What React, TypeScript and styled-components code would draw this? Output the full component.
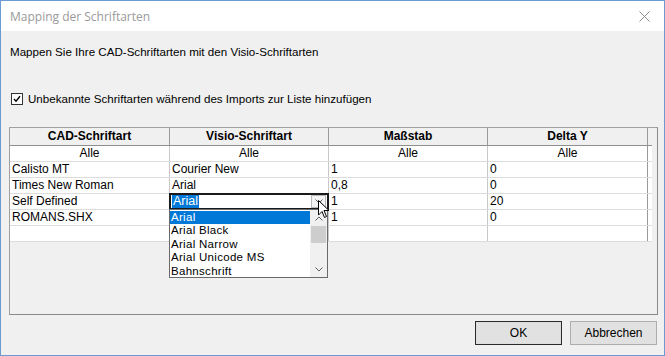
import * as React from 'react';
import styled, { createGlobalStyle } from 'styled-components';

interface IMapping {
	cad: string;
	visio: string;
	scale: string;
	deltaY: string;
	editing?: boolean;
}

const GlobalStyle = createGlobalStyle`
	html, body {
		margin: 0;
		padding: 0;
		background: #ffffff;
	}
	body {
		font-family: "Liberation Sans", Arial, sans-serif;
		font-size: 12px;
		color: #000;
	}
`;

const Window = styled.div`
	position: relative;
	width: 665px;
	height: 356px;
	box-sizing: border-box;
	border: 1px solid #6b9ad4;
	background: #f0f0f0;
	display: flex;
	flex-direction: column;
	overflow: hidden;
`;

const TitleBar = styled.div`
	height: 30px;
	flex: none;
	background: #ffffff;
	display: flex;
	align-items: center;
	justify-content: space-between;
	padding: 0 14px 0 9px;
`;

const Title = styled.div`
	font-family: "Open Sans", "Noto Sans", sans-serif;
	font-size: 12px;
	color: #9a9a9a;
`;

const Body = styled.div`
	flex: 1;
	display: flex;
	flex-direction: column;
	padding: 0 6px 0 8px;
`;

const Intro = styled.div`
	margin-top: 13px;
	line-height: 16px;
	font-size: 11.6px;
	padding-left: 1px;
`;

const CheckRow = styled.label`
	margin-top: 31px;
	display: flex;
	align-items: center;
	gap: 5px;
	line-height: 16px;
	font-size: 11.6px;
	padding-left: 2px;
`;

const CheckBox = styled.span`
	width: 10px;
	height: 10px;
	border: 1px solid #333;
	background: #fff;
	display: flex;
	align-items: center;
	justify-content: center;
`;

const GridFrame = styled.div`
	position: relative;
	margin-top: 20px;
	height: 188px;
	box-sizing: border-box;
	border: 1px solid #a0a0a0;
	border-right-color: #8a8a8a;
	border-bottom-color: #8a8a8a;
	padding-right: 5px;
`;

const Row = styled.div<{ $head?: boolean }>`
	display: grid;
	grid-template-columns: 160px 159px 159px 160px;
	height: ${(p) => (p.$head ? '18px' : '16px')};
	background: ${(p) => (p.$head ? '#f0f0f0' : '#ffffff')};
	border-bottom: 1px solid ${(p) => (p.$head ? '#8f8f8f' : '#dcdcdc')};
	box-sizing: border-box;
`;

const Cell = styled.div<{ $head?: boolean; $center?: boolean }>`
	position: relative;
	padding: 0 2px;
	line-height: ${(p) => (p.$head ? '17px' : '15px')};
	font-weight: ${(p) => (p.$head ? 'bold' : 'normal')};
	text-align: ${(p) => (p.$head || p.$center ? 'center' : 'left')};
	border-right: 1px solid ${(p) => (p.$head ? '#9a9a9a' : '#c8c8c8')};
	white-space: nowrap;
	overflow: visible;
	&:last-child {
		border-right: 1px solid #9a9a9a;
	}
`;

const Combo = styled.div`
	position: absolute;
	left: -1px;
	top: -1px;
	right: -1px;
	height: 17px;
	box-sizing: border-box;
	border: 2px solid #1a1a1a;
	background: #fff;
	display: flex;
	align-items: center;
	padding-left: 1px;
	z-index: 2;
`;

const Selected = styled.span`
	background: #0078d7;
	color: #fff;
	line-height: 13px;
	font-size: 12.5px;
	padding: 0 1px;
`;

const ComboButton = styled.span`
	margin-left: auto;
	width: 13px;
	height: 11px;
	border: 1px solid #b8b8b8;
	background: #f4f4f4;
	display: flex;
	align-items: center;
	justify-content: center;
	margin-right: 1px;
`;

const DropList = styled.div`
	position: absolute;
	left: 159px;
	top: 81px;
	width: 159px;
	height: 69px;
	box-sizing: border-box;
	border: 1px solid #6a6a6a;
	background: #fff;
	display: flex;
	z-index: 3;
`;

const Items = styled.div`
	flex: 1;
	padding-top: 1px;
`;

const Item = styled.div<{ $active?: boolean }>`
	height: 13.4px;
	line-height: 13.4px;
	font-size: 11.5px;
	letter-spacing: 0.3px;
	padding-left: 1px;
	background: ${(p) => (p.$active ? '#0078d7' : 'transparent')};
	color: ${(p) => (p.$active ? '#fff' : '#000')};
	white-space: nowrap;
	overflow: hidden;
`;

const ScrollBar = styled.div`
	width: 17px;
	background: #f0f0f0;
	display: flex;
	flex-direction: column;
`;

const ScrollArrow = styled.div`
	height: 16px;
	display: flex;
	align-items: center;
	justify-content: center;
`;

const Thumb = styled.div`
	height: 17px;
	background: #cdcdcd;
	margin: 0 1px;
`;

const Footer = styled.div`
	display: flex;
	justify-content: flex-end;
	gap: 8px;
	margin-top: 6px;
	padding-right: 1px;
`;

const Button = styled.div<{ $default?: boolean }>`
	width: 87px;
	height: 24px;
	box-sizing: border-box;
	border: 1px solid ${(p) => (p.$default ? '#2b2b2b' : '#adadad')};
	box-shadow: ${(p) => (p.$default ? 'inset 0 0 0 1px #dcdcdc' : 'none')};
	background: #e1e1e1;
	display: flex;
	align-items: center;
	justify-content: center;
`;

const Cursor = styled.svg`
	position: absolute;
	left: 317px;
	top: 199px;
	z-index: 5;
`;

const Chevron = ({ up }: { up?: boolean }) => (
	<svg width="8" height="5" viewBox="0 0 8 5">
		<path d={up ? 'M0.5 4.5 L4 1 L7.5 4.5' : 'M0.5 0.5 L4 4 L7.5 0.5'} fill="none" stroke="#606060" strokeWidth="1" />
	</svg>
);

const mappings: Array<IMapping> = [
	{ cad: 'Calisto MT', visio: 'Courier New', scale: '1', deltaY: '0' },
	{ cad: 'Times New Roman', visio: 'Arial', scale: '0,8', deltaY: '0' },
	{ cad: 'Self Defined', visio: 'Arial', scale: '1', deltaY: '20', editing: true },
	{ cad: 'ROMANS.SHX', visio: '', scale: '1', deltaY: '0' },
	{ cad: '', visio: '', scale: '', deltaY: '' },
];

const fonts = ['Arial', 'Arial Black', 'Arial Narrow', 'Arial Unicode MS', 'Bahnschrift'];

export default function App() {
	return (
		<>
			<GlobalStyle />
			<Window>
				<TitleBar>
					<Title>Mapping der Schriftarten</Title>
					<svg width="11" height="11" viewBox="0 0 11 11">
						<path d="M0.5 0.5 L10.5 10.5 M10.5 0.5 L0.5 10.5" stroke="#8c8c8c" strokeWidth="1" />
					</svg>
				</TitleBar>
				<Body>
					<Intro>Mappen Sie Ihre CAD-Schriftarten mit den Visio-Schriftarten</Intro>
					<CheckRow>
						<CheckBox>
							<svg width="8" height="8" viewBox="0 0 8 8">
								<path d="M1 4 L3 6.2 L7 1.2" fill="none" stroke="#000" strokeWidth="1.4" />
							</svg>
						</CheckBox>
						Unbekannte Schriftarten während des Imports zur Liste hinzufügen
					</CheckRow>
					<GridFrame>
						<Row $head>
							<Cell $head>CAD-Schriftart</Cell>
							<Cell $head>Visio-Schriftart</Cell>
							<Cell $head>Maßstab</Cell>
							<Cell $head>Delta Y</Cell>
						</Row>
						<Row>
							<Cell $center>Alle</Cell>
							<Cell $center>Alle</Cell>
							<Cell $center>Alle</Cell>
							<Cell $center>Alle</Cell>
						</Row>
						{mappings.map((m, idx) => (
							<Row key={idx}>
								<Cell>{m.cad}</Cell>
								<Cell>
									{m.editing ? (
										<Combo>
											<Selected>{m.visio}</Selected>
											<ComboButton><Chevron /></ComboButton>
										</Combo>
									) : m.visio}
								</Cell>
								<Cell>{m.scale}</Cell>
								<Cell>{m.deltaY}</Cell>
							</Row>
						))}
						<DropList>
							<Items>
								{fonts.map((f, idx) => (
									<Item key={f} $active={idx === 0}>{f}</Item>
								))}
							</Items>
							<ScrollBar>
								<ScrollArrow><Chevron up /></ScrollArrow>
								<Thumb />
								<div style={{ flex: 1 }} />
								<ScrollArrow><Chevron /></ScrollArrow>
							</ScrollBar>
						</DropList>
					</GridFrame>
					<Footer>
						<Button $default>OK</Button>
						<Button>Abbrechen</Button>
					</Footer>
				</Body>
				<Cursor width="12" height="19" viewBox="0 0 12 19">
					<path d="M0.5 0.5 L0.5 15 L4 11.5 L6.5 17.5 L8.5 16.5 L6 10.5 L11 10.5 Z" fill="#fff" stroke="#000" strokeWidth="1" />
				</Cursor>
			</Window>
		</>
	);
}
